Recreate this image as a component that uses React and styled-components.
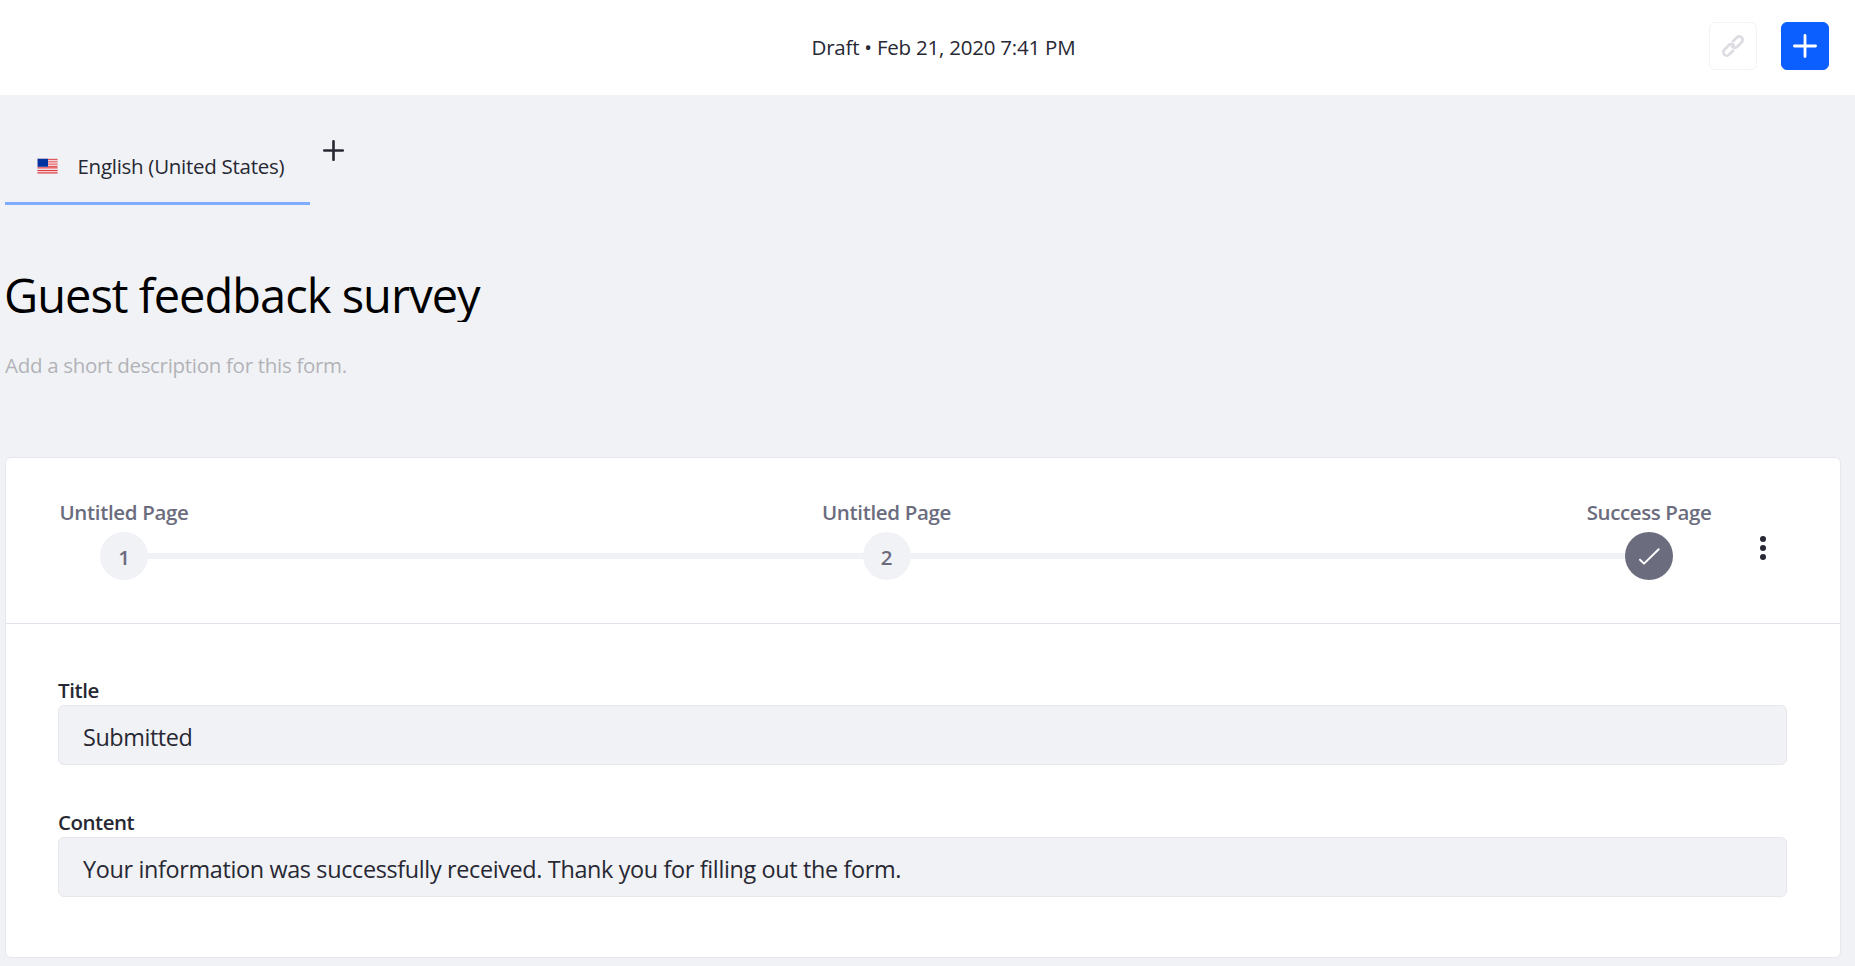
import React from 'react';
import styled, { createGlobalStyle } from 'styled-components';

const GlobalStyle = createGlobalStyle`
  *, *::before, *::after { box-sizing: border-box; }
  body {
    margin: 0;
    background: #f1f2f5;
    color: #272833;
    font-family: "Open Sans", "Noto Sans", sans-serif;
    font-size: 20.5px;
    line-height: 30px;
  }
  button { font: inherit; color: inherit; padding: 0; border: 0; background: none; }
`;

const Page = styled.div`
  height: 966px;
  overflow: hidden;
`;

const Toolbar = styled.header`
  display: grid;
  grid-template-columns: 811.5px 1fr auto;
  align-items: center;
  height: 95px;
  padding: 0 26px 3px 0;
  background: #fff;
`;

const Status = styled.div`
  grid-column: 2;
  padding-top: 1px;
  white-space: nowrap;
  letter-spacing: ${(p) => p.$track}px;
`;

const Actions = styled.div`
  display: flex;
  gap: 24px;
`;

const IconButton = styled.button`
  display: flex;
  align-items: center;
  justify-content: center;
  width: 48px;
  height: 48px;
  border-radius: 6px;
  border: 1px solid ${(p) => (p.$primary ? '#0b5fff' : '#f3f3f6')};
  background: ${(p) => (p.$primary ? '#0b5fff' : '#fff')};
  color: ${(p) => (p.$primary ? '#fff' : '#dcdce2')};
`;

const Tabs = styled.nav`
  display: flex;
  align-items: flex-start;
  padding: 25px 0 0 5px;
`;

const Tab = styled.button`
  display: flex;
  align-items: center;
  gap: 19.5px;
  width: 305px;
  height: 85px;
  padding: 10px 0 0 32px;
  border-bottom: 3px solid #80acff;
  white-space: nowrap;
  letter-spacing: ${(p) => p.$track}px;
`;

const AddTab = styled.button`
  display: flex;
  margin: 20px 0 0 13px;
`;

const FormTitle = styled.h1`
  margin: 61px 0 0 4px;
  height: 56px;
  overflow: hidden;
  color: #000;
  font-size: 47px;
  font-weight: 400;
  line-height: 59px;
  white-space: nowrap;
  letter-spacing: ${(p) => p.$track}px;
`;

const Description = styled.p`
  margin: 28px 0 0 5px;
  color: #b1b3b8;
  letter-spacing: ${(p) => p.$track}px;
`;

const Card = styled.main`
  margin: 77px 14px 0 5px;
  height: 501px;
  border: 1px solid #e7e7ed;
  border-radius: 6px;
  background: #fff;
`;

const Wizard = styled.div`
  display: flex;
  height: 166px;
  padding: 39px 0 0 52px;
  border-bottom: 1px solid #e1e2e9;
`;

const Steps = styled.ol`
  display: flex;
  justify-content: space-between;
  width: 1657px;
  margin: 0;
  padding: 0;
  list-style: none;
`;

const Step = styled.li`
  position: relative;
  display: flex;
  flex-direction: column;
  align-items: center;
  width: 132px;
  color: #6b6c7e;
  font-weight: 600;

  &:not(:last-child)::after {
    content: "";
    position: absolute;
    top: 56px;
    left: 89px;
    width: 717px;
    height: 6px;
    background: #f1f2f5;
  }
`;

const StepLabel = styled.span`
  white-space: nowrap;
  letter-spacing: ${(p) => p.$track}px;
`;

const StepDot = styled.span`
  display: flex;
  align-items: center;
  justify-content: center;
  width: 48px;
  height: 48px;
  margin-top: 5px;
  padding-top: ${(p) => (p.$done ? 0 : 2)}px;
  border-radius: 50%;
  background: ${(p) => (p.$done ? '#6b6c7e' : '#f1f2f5')};
  color: ${(p) => (p.$done ? '#fff' : '#6b6c7e')};
`;

const MenuButton = styled.button`
  display: flex;
  align-self: flex-start;
  margin: 39px 0 0 45px;
`;

const Fields = styled.div`
  padding: 51px 53px 0 52px;
`;

const Field = styled.label`
  display: block;
  margin-bottom: 42px;
`;

const FieldLabel = styled.span`
  display: block;
  font-weight: 600;
  letter-spacing: ${(p) => p.$track}px;
`;

const FieldValue = styled.span`
  display: flex;
  align-items: center;
  height: 60px;
  padding: 3px 24px 0;
  border: 1px solid #e7e7ed;
  border-radius: 6px;
  background: #f1f2f5;
  font-size: 23.4px;
  white-space: nowrap;
  letter-spacing: ${(p) => p.$track}px;
`;

const LinkIcon = () => (
  <svg width="24" height="24" viewBox="0 0 24 24" fill="none" stroke="currentColor" strokeWidth="2.7" strokeLinecap="round">
    <path d="M12 7.3 15.9 3.4a3.4 3.4 0 0 1 4.8 0 3.4 3.4 0 0 1 0 4.8L16.1 12.8a3.4 3.4 0 0 1-4.8 0" />
    <path d="M12 16.7 8.1 20.6a3.4 3.4 0 0 1-4.8 0 3.4 3.4 0 0 1 0-4.8L7.9 11.2a3.4 3.4 0 0 1 4.8 0" />
  </svg>
);

const PlusIcon = ({ size, weight }) => (
  <svg width={size} height={size} viewBox="0 0 24 24" stroke="currentColor" strokeWidth={weight} strokeLinecap="round">
    <path d="M12 1.4v21.2M1.4 12h21.2" />
  </svg>
);

const FlagIcon = () => (
  <svg width="21" height="16" viewBox="0 0 21 16">
    <rect width="21" height="16" fill="#dfd5d9" />
    <rect x="0.6" y="0.8" width="19.8" height="14.4" fill="#f7e3e5" />
    {[1, 3.3, 5.6, 7.9].map((y) => (
      <rect key={y} x="11" y={y} width="9.4" height="1.1" fill="#e2585f" />
    ))}
    {[9.3, 12, 14.3].map((y) => (
      <rect key={y} x="0.6" y={y} width="19.8" height="1.1" fill="#e0393f" />
    ))}
    <rect x="0.6" y="0.8" width="10.4" height="8" fill="#0033a0" />
  </svg>
);

const CheckIcon = () => (
  <svg width="24" height="24" viewBox="0 0 24 24" fill="none" stroke="currentColor" strokeWidth="2" strokeLinecap="round" strokeLinejoin="round">
    <path d="M3 15.7 7 19.6 21.7 5.2" />
  </svg>
);

const DotsIcon = () => (
  <svg width="6" height="24" viewBox="0 0 6 24" fill="currentColor">
    <circle cx="3" cy="3" r="3" />
    <circle cx="3" cy="12" r="3" />
    <circle cx="3" cy="21" r="3" />
  </svg>
);

export default function App() {
  return (
    <Page>
      <GlobalStyle />
      <Toolbar>
        <Status $track={-0.22}>Draft • Feb 21, 2020 7:41 PM</Status>
        <Actions>
          <IconButton aria-label="Share"><LinkIcon /></IconButton>
          <IconButton $primary aria-label="Add element"><PlusIcon size={24} weight={2.8} /></IconButton>
        </Actions>
      </Toolbar>
      <Tabs>
        <Tab $track={-0.28}><FlagIcon />English (United States)</Tab>
        <AddTab aria-label="Add translation"><PlusIcon size={21} weight={3} /></AddTab>
      </Tabs>
      <FormTitle $track={-0.98}>Guest feedback survey</FormTitle>
      <Description $track={-0.3}>Add a short description for this form.</Description>
      <Card>
        <Wizard>
          <Steps>
            <Step><StepLabel $track={-0.33}>Untitled Page</StepLabel><StepDot>1</StepDot></Step>
            <Step><StepLabel $track={-0.33}>Untitled Page</StepLabel><StepDot>2</StepDot></Step>
            <Step><StepLabel $track={-0.4}>Success Page</StepLabel><StepDot $done><CheckIcon /></StepDot></Step>
          </Steps>
          <MenuButton aria-label="Page options"><DotsIcon /></MenuButton>
        </Wizard>
        <Fields>
          <Field>
            <FieldLabel $track={-0.4}>Title</FieldLabel>
            <FieldValue $track={-0.42}>Submitted</FieldValue>
          </Field>
          <Field>
            <FieldLabel $track={-0.5}>Content</FieldLabel>
            <FieldValue $track={-0.345}>Your information was successfully received. Thank you for filling out the form.</FieldValue>
          </Field>
        </Fields>
      </Card>
    </Page>
  );
}
